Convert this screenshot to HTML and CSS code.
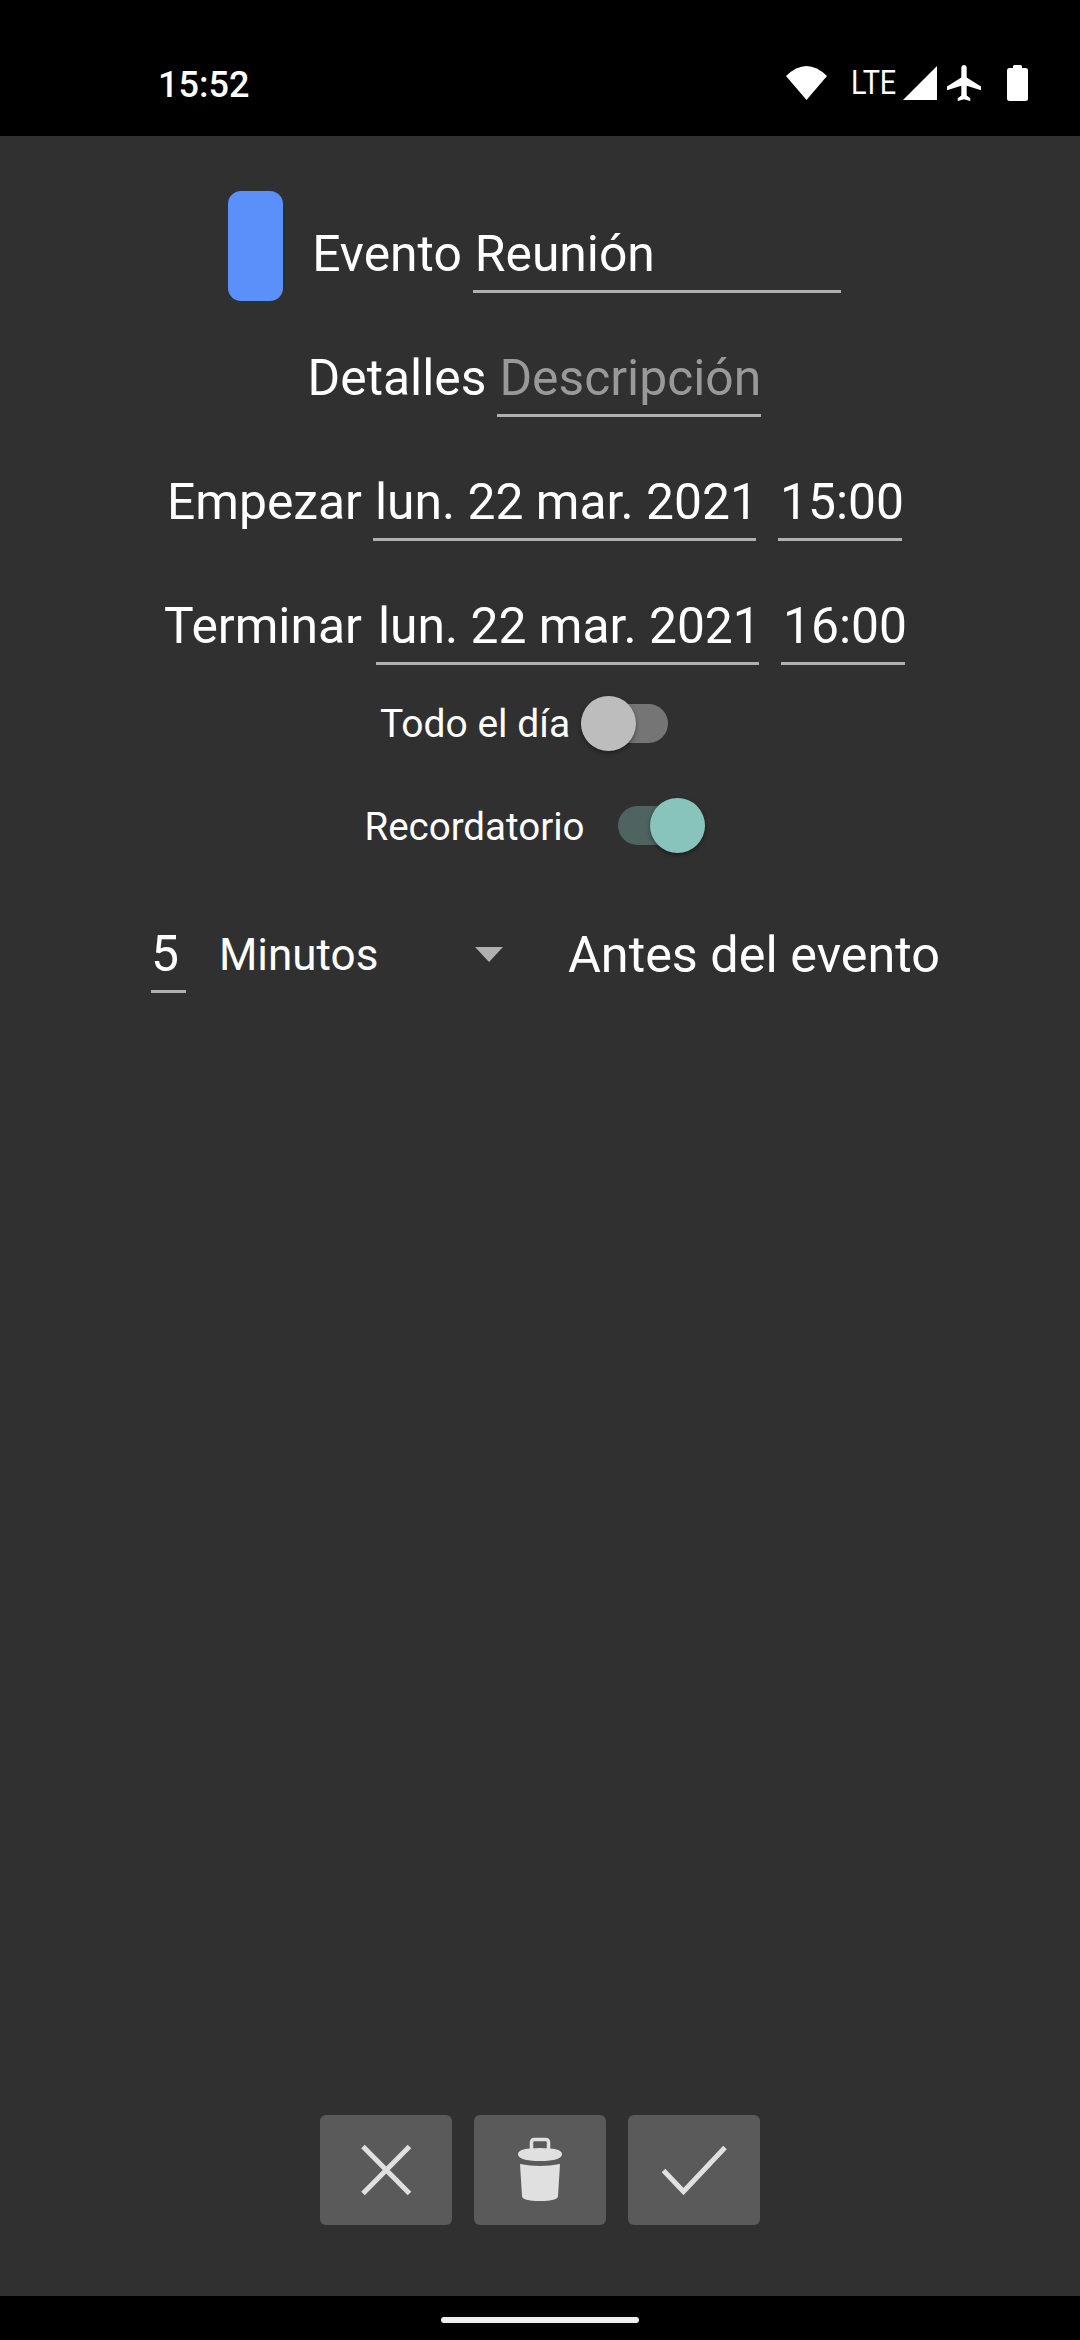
FILE: index.html
```html
<!DOCTYPE html>
<html lang="es">
<head>
  <meta charset="UTF-8">
  <meta name="viewport" content="width=device-width, initial-scale=1.0">
  <title>Evento</title>
  <link rel="stylesheet" href="styles.css">
</head>
<body>
  <div class="status-bar">
    <span class="clock">15:52</span>
    <div class="status-icons">
      <svg class="icon-wifi" width="41" height="34" viewBox="0 0 41 34"><path d="M20.5 34L0 10Q20.5-10 41 10Z" fill="#fff"/></svg>
      <span class="lte">LTE</span>
      <svg class="icon-signal" width="34" height="34" viewBox="0 0 34 34"><path d="M34 0V34H0Z" fill="#fff"/></svg>
      <svg class="icon-plane" width="34" height="36" viewBox="2 2 19 20" preserveAspectRatio="none"><path d="M21 16v-2l-8-5V3.5c0-.83-.67-1.5-1.5-1.5S10 2.67 10 3.5V9l-8 5v2l8-2.5V19l-2 1.5V22l3.5-1 3.5 1v-1.5L13 19v-5.5l8 2.5z" fill="#fff"/></svg>
      <svg class="icon-battery" width="21" height="36" viewBox="0 0 21 36"><path d="M6 3V1.5Q6 0 7.500 0h6Q15 0 15 1.500V3h3.500Q21 3 21 5.500V33.500Q21 36 18.500 36H2.500Q0 36 0 33.500V5.500Q0 3 2.500 3Z" fill="#fff"/></svg>
    </div>
  </div>

  <div class="content">
    <div class="row row-title">
      <div class="swatch"></div>
      <span class="label">Evento</span>
      <div class="field field-name">Reunión</div>
    </div>
    <div class="row row-details">
      <span class="label">Detalles</span>
      <div class="field placeholder">Descripción</div>
    </div>
    <div class="row">
      <span class="label">Empezar</span>
      <div class="field field-date">lun. 22 mar. 2021</div>
      <div class="field field-time">15:00</div>
    </div>
    <div class="row row-end">
      <span class="label">Terminar</span>
      <div class="field field-date">lun. 22 mar. 2021</div>
      <div class="field field-time">16:00</div>
    </div>

    <div class="toggle-row toggle-allday">
      <span class="toggle-label">Todo el día</span>
      <div class="switch"><div class="track"></div><div class="thumb"></div></div>
    </div>
    <div class="toggle-row toggle-reminder">
      <span class="toggle-label">Recordatorio</span>
      <div class="switch on"><div class="track"></div><div class="thumb"></div></div>
    </div>

    <div class="row row-reminder">
      <div class="field field-count">5</div>
      <div class="spinner">
        <span>Minutos</span>
        <div class="spinner-arrow"></div>
      </div>
      <span class="label">Antes del evento</span>
    </div>

    <div class="actions">
      <button class="action">
        <svg width="72" height="72" viewBox="0 0 72 72"><path d="M13 12.500L59.500 59.500M59.500 12.500L13 59.500" stroke="#e0e0e0" stroke-width="5" fill="none"/></svg>
      </button>
      <button class="action">
        <svg width="72" height="72" viewBox="0 0 72 72">
          <rect x="27.500" y="5.500" width="17" height="12" rx="2.500" stroke="#e0e0e0" stroke-width="3.500" fill="none"/>
          <path d="M14 20Q14 14 36 14Q58 14 58 20Q58 27 36 27Q14 27 14 20Z" fill="#e0e0e0"/>
          <path d="M16 30Q36 34 56 30L54 62Q54 67 36 67Q18 67 18 62Z" fill="#e0e0e0"/>
        </svg>
      </button>
      <button class="action">
        <svg width="72" height="72" viewBox="0 0 72 72"><path d="M5.500 36.500L25.500 57.500L67 13.500" stroke="#e0e0e0" stroke-width="5" fill="none"/></svg>
      </button>
    </div>
  </div>

  <div class="nav-bar"><div class="home-pill"></div></div>
</body>
</html>
```

FILE: styles.css
```css
* {
  box-sizing: border-box;
}

body {
  margin: 0;
  width: 1080px;
  height: 2340px;
  display: flex;
  flex-direction: column;
  background-color: #303030;
  color: white;
  font-family: Roboto, "Liberation Sans", sans-serif;
  overflow: hidden;
}

.status-bar {
  height: 136px;
  background-color: black;
  display: flex;
  align-items: center;
  justify-content: space-between;
  padding: 30px 52px 0 158px;
}

.clock {
  font-size: 36px;
  font-weight: 500;
  margin-top: 4px;
}

.status-icons {
  display: flex;
  align-items: center;
}

.lte {
  font-size: 33.5px;
  width: 44px;
  margin-left: 24px;
  line-height: 36px;
  transform: scaleX(0.86);
  transform-origin: left center;
}

.icon-signal {
  margin-left: 8px;
}

.icon-plane {
  margin-left: 10px;
}

.icon-battery {
  margin-left: 26px;
}

.content {
  flex: 1;
  display: flex;
  flex-direction: column;
  padding: 55px 11px 71px 0;
}

.row {
  display: flex;
  justify-content: center;
  align-items: flex-end;
  font-size: 49.8px;
  margin-top: 58px;
}

.row-title {
  margin-top: 0;
}

.row-details {
  margin-top: 50px;
}

.row-title .field {
  margin-bottom: 8px;
}

.row-title .label {
  margin-bottom: 19px;
}

.swatch {
  width: 55px;
  height: 110px;
  background-color: #5b8ff9;
  border-radius: 13px;
  margin-right: 29px;
  align-self: flex-start;
}

.label {
  line-height: 55px;
  margin-right: 11px;
  margin-bottom: 11px;
}

.field {
  height: 66px;
  line-height: 55px;
  padding-left: 2px;
  border-bottom: 3px solid #b0b0b0;
  white-space: nowrap;
}

.field-name {
  width: 368px;
}

.placeholder {
  width: 264px;
  color: #999;
}

.field-date {
  width: 383px;
}

.field-time {
  width: 124px;
  margin-left: 22px;
}

.row-end .label {
  margin-right: 14px;
}

.toggle-row {
  display: flex;
  justify-content: center;
  align-items: center;
  font-size: 38.5px;
}

.toggle-allday {
  font-size: 39px;
  margin-top: 31px;
  padding-right: 21px;
}

.toggle-reminder {
  margin-top: 46px;
}

.toggle-label {
  margin-right: 11px;
}

.toggle-reminder .toggle-label {
  margin-right: 33px;
}

.switch {
  position: relative;
  width: 87px;
  height: 56px;
}

.track {
  position: absolute;
  left: 0;
  right: 0;
  top: 8px;
  height: 39px;
  border-radius: 20px;
  background-color: #757575;
}

.thumb {
  position: absolute;
  left: 0;
  top: 0;
  width: 55px;
  height: 55px;
  border-radius: 50%;
  background-color: #bdbdbd;
  box-shadow: 0 2px 4px rgba(0,0,0,0.4);
}

.switch.on .track {
  background-color: #4f6361;
}

.switch.on .thumb {
  left: 32px;
  background-color: #89c4bc;
}

.row-reminder {
  margin-top: 73px;
  padding-left: 22px;
}

.field-count {
  width: 35px;
  padding-left: 0;
}

.spinner {
  width: 284px;
  margin-left: 33px;
  margin-right: 65px;
  margin-bottom: 11px;
  height: 55px;
  display: flex;
  align-items: center;
  justify-content: space-between;
  font-size: 44px;
}

.spinner-arrow {
  width: 0;
  height: 0;
  border-left: 14px solid transparent;
  border-right: 14px solid transparent;
  border-top: 15px solid #b0b0b0;
}

.row-reminder .label {
  font-size: 50.4px;
  margin-right: 0;
}

.actions {
  margin-top: auto;
  padding-left: 11px;
  display: flex;
  justify-content: center;
  gap: 22px;
}

.action {
  width: 132px;
  height: 110px;
  padding: 0;
  border: none;
  border-radius: 6px;
  background-color: #5a5a5b;
  display: flex;
  align-items: center;
  justify-content: center;
}

.nav-bar {
  height: 44px;
  background-color: black;
  display: flex;
  justify-content: center;
  padding-top: 21px;
}

.home-pill {
  width: 198px;
  height: 6px;
  border-radius: 3px;
  background-color: #eee;
}
```
